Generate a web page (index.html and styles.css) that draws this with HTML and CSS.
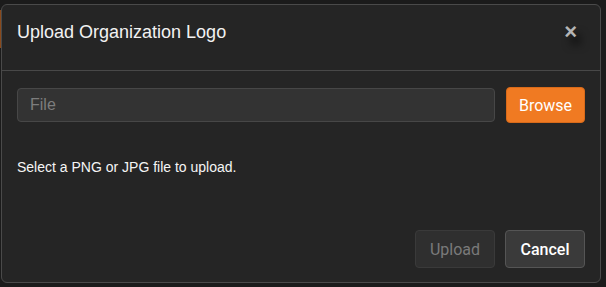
FILE: index.html
```html
<!DOCTYPE html>
<html>
  <head>
    <link rel="stylesheet" href="styles.css">
  </head>
  <body>
    <div class="page-tab"></div>
    <div class="modal">
      <div class="modal-header">
        <span class="modal-title">Upload Organization Logo</span>
        <button type="button" class="modal-close">&times;</button>
      </div>
      <div class="modal-body">
        <div class="file-row">
          <input type="text" class="file-input" placeholder="File" readonly>
          <button type="button" class="btn btn-browse">Browse</button>
        </div>
        <p class="file-hint">Select a PNG or JPG file to upload.</p>
      </div>
      <div class="modal-footer">
        <button type="button" class="btn btn-upload" disabled>Upload</button>
        <button type="button" class="btn btn-cancel">Cancel</button>
      </div>
    </div>
  </body>
</html>
```

FILE: styles.css
```css
html, body {
  margin: 0;
  height: 100%;
}
body {
  background: #1b1b1b;
  font-family: "Liberation Sans", Arial, sans-serif;
  position: relative;
  overflow: hidden;
}
.page-tab {
  position: absolute;
  left: 0;
  top: 10px;
  width: 2px;
  height: 38px;
  background: #8a4a1c;
}
.modal {
  position: relative;
  margin: 4px 0 0 1px;
  width: 598px;
  height: 277px;
  background: #252525;
  border: 1px solid #4a4a4a;
  border-radius: 6px;
  display: flex;
  flex-direction: column;
}
.modal-header {
  height: 66px;
  box-sizing: border-box;
  padding: 16px 15px 0 15px;
  display: flex;
  align-items: flex-start;
  justify-content: space-between;
  border-bottom: 1px solid #484848;
}
.modal-title {
  font-size: 18px;
  line-height: 22px;
  color: #f2f2f2;
}
.modal-close {
  border: none;
  background: transparent;
  color: #b5b5b5;
  font-family: "Liberation Sans", Arial, sans-serif;
  font-weight: bold;
  font-size: 22px;
  line-height: 22px;
  padding: 0;
  margin: 0 8px 0 0;
  cursor: pointer;
  text-shadow: 5px 8px 8px rgba(0,0,0,0.8);
}
.modal-body {
  padding: 16px 15px 0 15px;
  flex: 1;
}
.file-row {
  display: flex;
  align-items: center;
  gap: 11px;
}
.file-input {
  flex: 1;
  height: 34px;
  box-sizing: border-box;
  background: #333333;
  border: 1px solid #474747;
  border-radius: 4px;
  padding: 0 12px;
  font-family: "Liberation Sans", Arial, sans-serif;
  font-size: 16px;
  color: #ddd;
  outline: none;
}
.file-input::placeholder {
  color: #7d7d7d;
}
.btn {
  font-family: Roboto, "Liberation Sans", sans-serif;
  font-size: 16px;
  border-radius: 4px;
  box-sizing: border-box;
  cursor: pointer;
}
.btn-browse {
  width: 79px;
  height: 36px;
  background: #f07a22;
  border: 1px solid #d86a1a;
  color: #fff;
}
.file-hint {
  margin: 35px 0 0 0;
  font-size: 14px;
  line-height: 18px;
  color: #f5f5f5;
}
.modal-footer {
  display: flex;
  justify-content: flex-end;
  gap: 10px;
  padding: 0 15px 14px 0;
}
.btn-upload,
.btn-cancel {
  width: 80px;
  height: 38px;
}
.btn-upload {
  background: #2f2f2f;
  border: 1px solid #3a3a3a;
  color: #7a7a7a;
  cursor: default;
}
.btn-cancel {
  background: #3a3a3a;
  border: 1px solid #555555;
  color: #ffffff;
  font-weight: 500;
}
```
